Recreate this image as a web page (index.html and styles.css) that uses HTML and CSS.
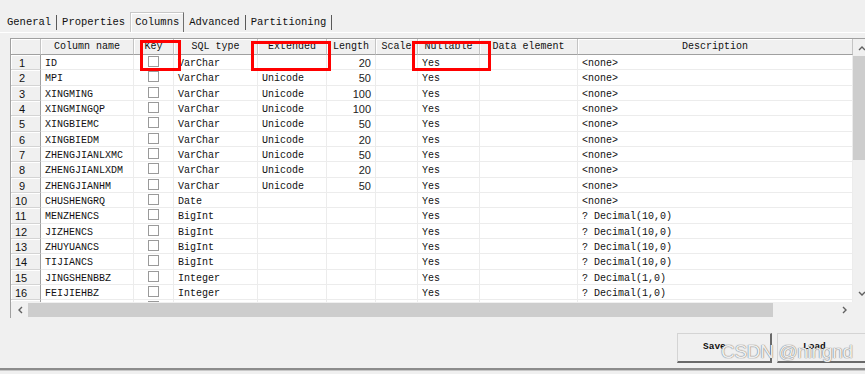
FILE: index.html
```html
<!DOCTYPE html>
<html lang="en">
<head>
    <meta charset="utf-8">
    <title>Table Properties - Columns</title>
    <link rel="stylesheet" href="styles.css">
</head>
<body>
<div class="page">
    <div class="tabs">
        <div class="tab sep">General</div>
        <div class="tab">Properties</div>
        <div class="tab active">Columns</div>
        <div class="tab sep">Advanced</div>
        <div class="tab sep">Partitioning</div>
    </div>

    <div class="grid">
        <div class="gridMain">
            <div class="gridView">
                <div class="row head">
                    <div class="cell num"></div>
                    <div class="cell">Column name</div>
                    <div class="cell">Key</div>
                    <div class="cell">SQL type</div>
                    <div class="cell">Extended</div>
                    <div class="cell">Length</div>
                    <div class="cell">Scale</div>
                    <div class="cell">Nullable</div>
                    <div class="cell">Data element</div>
                    <div class="cell">Description</div>
                </div>
                <div class="row">
                    <div class="cell num">1</div><div class="cell">ID</div><div class="cell key"><span class="box"></span></div><div class="cell">VarChar</div><div class="cell"></div><div class="cell len">20</div><div class="cell"></div><div class="cell">Yes</div><div class="cell"></div><div class="cell">&lt;none&gt;</div>
                </div>
                <div class="row">
                    <div class="cell num">2</div><div class="cell">MPI</div><div class="cell key"><span class="box"></span></div><div class="cell">VarChar</div><div class="cell">Unicode</div><div class="cell len">50</div><div class="cell"></div><div class="cell">Yes</div><div class="cell"></div><div class="cell">&lt;none&gt;</div>
                </div>
                <div class="row">
                    <div class="cell num">3</div><div class="cell">XINGMING</div><div class="cell key"><span class="box"></span></div><div class="cell">VarChar</div><div class="cell">Unicode</div><div class="cell len">100</div><div class="cell"></div><div class="cell">Yes</div><div class="cell"></div><div class="cell">&lt;none&gt;</div>
                </div>
                <div class="row">
                    <div class="cell num">4</div><div class="cell">XINGMINGQP</div><div class="cell key"><span class="box"></span></div><div class="cell">VarChar</div><div class="cell">Unicode</div><div class="cell len">100</div><div class="cell"></div><div class="cell">Yes</div><div class="cell"></div><div class="cell">&lt;none&gt;</div>
                </div>
                <div class="row">
                    <div class="cell num">5</div><div class="cell">XINGBIEMC</div><div class="cell key"><span class="box"></span></div><div class="cell">VarChar</div><div class="cell">Unicode</div><div class="cell len">50</div><div class="cell"></div><div class="cell">Yes</div><div class="cell"></div><div class="cell">&lt;none&gt;</div>
                </div>
                <div class="row">
                    <div class="cell num">6</div><div class="cell">XINGBIEDM</div><div class="cell key"><span class="box"></span></div><div class="cell">VarChar</div><div class="cell">Unicode</div><div class="cell len">20</div><div class="cell"></div><div class="cell">Yes</div><div class="cell"></div><div class="cell">&lt;none&gt;</div>
                </div>
                <div class="row">
                    <div class="cell num">7</div><div class="cell">ZHENGJIANLXMC</div><div class="cell key"><span class="box"></span></div><div class="cell">VarChar</div><div class="cell">Unicode</div><div class="cell len">50</div><div class="cell"></div><div class="cell">Yes</div><div class="cell"></div><div class="cell">&lt;none&gt;</div>
                </div>
                <div class="row">
                    <div class="cell num">8</div><div class="cell">ZHENGJIANLXDM</div><div class="cell key"><span class="box"></span></div><div class="cell">VarChar</div><div class="cell">Unicode</div><div class="cell len">20</div><div class="cell"></div><div class="cell">Yes</div><div class="cell"></div><div class="cell">&lt;none&gt;</div>
                </div>
                <div class="row">
                    <div class="cell num">9</div><div class="cell">ZHENGJIANHM</div><div class="cell key"><span class="box"></span></div><div class="cell">VarChar</div><div class="cell">Unicode</div><div class="cell len">50</div><div class="cell"></div><div class="cell">Yes</div><div class="cell"></div><div class="cell">&lt;none&gt;</div>
                </div>
                <div class="row">
                    <div class="cell num">10</div><div class="cell">CHUSHENGRQ</div><div class="cell key"><span class="box"></span></div><div class="cell">Date</div><div class="cell"></div><div class="cell len"></div><div class="cell"></div><div class="cell">Yes</div><div class="cell"></div><div class="cell">&lt;none&gt;</div>
                </div>
                <div class="row">
                    <div class="cell num">11</div><div class="cell">MENZHENCS</div><div class="cell key"><span class="box"></span></div><div class="cell">BigInt</div><div class="cell"></div><div class="cell len"></div><div class="cell"></div><div class="cell">Yes</div><div class="cell"></div><div class="cell">? Decimal(10,0)</div>
                </div>
                <div class="row">
                    <div class="cell num">12</div><div class="cell">JIZHENCS</div><div class="cell key"><span class="box"></span></div><div class="cell">BigInt</div><div class="cell"></div><div class="cell len"></div><div class="cell"></div><div class="cell">Yes</div><div class="cell"></div><div class="cell">? Decimal(10,0)</div>
                </div>
                <div class="row">
                    <div class="cell num">13</div><div class="cell">ZHUYUANCS</div><div class="cell key"><span class="box"></span></div><div class="cell">BigInt</div><div class="cell"></div><div class="cell len"></div><div class="cell"></div><div class="cell">Yes</div><div class="cell"></div><div class="cell">? Decimal(10,0)</div>
                </div>
                <div class="row">
                    <div class="cell num">14</div><div class="cell">TIJIANCS</div><div class="cell key"><span class="box"></span></div><div class="cell">BigInt</div><div class="cell"></div><div class="cell len"></div><div class="cell"></div><div class="cell">Yes</div><div class="cell"></div><div class="cell">? Decimal(10,0)</div>
                </div>
                <div class="row">
                    <div class="cell num">15</div><div class="cell">JINGSHENBBZ</div><div class="cell key"><span class="box"></span></div><div class="cell">Integer</div><div class="cell"></div><div class="cell len"></div><div class="cell"></div><div class="cell">Yes</div><div class="cell"></div><div class="cell">? Decimal(1,0)</div>
                </div>
                <div class="row">
                    <div class="cell num">16</div><div class="cell">FEIJIEHBZ</div><div class="cell key"><span class="box"></span></div><div class="cell">Integer</div><div class="cell"></div><div class="cell len"></div><div class="cell"></div><div class="cell">Yes</div><div class="cell"></div><div class="cell">? Decimal(1,0)</div>
                </div>
                <div class="row">
                    <div class="cell num"></div><div class="cell"></div><div class="cell key"><span class="box"></span></div><div class="cell"></div><div class="cell"></div><div class="cell len"></div><div class="cell"></div><div class="cell"></div><div class="cell"></div><div class="cell"></div>
                </div>
            </div>
            <div class="vscroll">
                <div class="arrow">
                    <svg width="8" height="6" viewBox="0 0 8 6"><polyline points="1,5 4,2 7,5" fill="none" stroke="#606060" stroke-width="1.4"/></svg>
                </div>
                <div class="vtrack"><div class="vthumb"></div></div>
                <div class="arrow">
                    <svg width="8" height="6" viewBox="0 0 8 6"><polyline points="1,1 4,4 7,1" fill="none" stroke="#606060" stroke-width="1.4"/></svg>
                </div>
            </div>
        </div>
        <div class="hscroll">
            <div class="arrow">
                <svg width="6" height="8" viewBox="0 0 6 8"><polyline points="5,1 2,4 5,7" fill="none" stroke="#606060" stroke-width="1.4"/></svg>
            </div>
            <div class="htrack"><div class="hthumb"></div></div>
            <div class="arrow">
                <svg width="6" height="8" viewBox="0 0 6 8"><polyline points="1,1 4,4 1,7" fill="none" stroke="#606060" stroke-width="1.4"/></svg>
            </div>
            <div class="corner"></div>
        </div>
    </div>

    <div class="actions">
        <div class="btn">Save</div>
        <div class="btn">Load</div>
    </div>
    <div class="bottomLine"></div>

    <!-- annotations drawn over the grid -->
    <div class="mark markKey"></div>
    <div class="mark markExt"></div>
    <div class="mark markNull"></div>
    <div class="watermark">CSDN @ningnd</div>
</div>
</body>
</html>
```

FILE: styles.css
```css
body{
    margin: 0;
    background: #f0f0f0;
    font-family: "Liberation Mono", "DejaVu Sans Mono", monospace;
    font-size: 10px;
    color: #111;
}
.page{
    position: relative;
    width: 865px;
    height: 374px;
    overflow: hidden;
}

/* tabs */
.tabs{
    display: flex;
    align-items: flex-end;
    height: 20px;
    padding: 12px 0 0 2px;
    border-bottom: 1px solid #fff;
}
.tab{
    height: 15px;
    line-height: 15px;
    margin-bottom: 2px;
    padding: 0 5px;
    font-size: 10.5px;
    white-space: nowrap;
}
.tab.sep{
    border-right: 1px solid #5a5a5a;
}
.tab.active{
    height: 19px;
    line-height: 18px;
    margin-bottom: 0;
    padding: 0 4px;
    border: 1px solid #c8c8c8;
    border-right-color: #6e6e6e;
    border-bottom: none;
    box-shadow: 1px 1px 0 #fff inset;
}

/* grid */
.grid{
    margin: 5px 0 0 10px;
    border-left: 1px solid #a0a0a0;
    border-top: 1px solid #a0a0a0;
    width: 860px;
}
.gridMain{
    display: flex;
}
.gridView{
    width: 842px;
    height: 263px;
    overflow: hidden;
}
.row{
    display: grid;
    grid-template-columns: 30px 93px 40px 84px 69px 49px 42px 62px 98px 275px;
    height: 15.33px;
}
.cell{
    box-sizing: border-box;
    background: #fff;
    border-right: 1px solid #ececec;
    border-bottom: 1px solid #ececec;
    padding: 1px 4px 0;
    line-height: 15px;
    white-space: nowrap;
    overflow: hidden;
}
.row.head{
    height: 16px;
}
.row.head .cell{
    background: #f0f0f0;
    border-right-color: #c4c4c4;
    border-bottom-color: #a0a0a0;
    box-shadow: 1px 1px 0 #fff inset;
    text-align: center;
    padding-top: 0;
    line-height: 16px;
}
.cell.num{
    background: #f0f0f0;
    border-right-color: #a0a0a0;
    border-bottom-color: #d4d4d4;
    box-shadow: 1px 1px 0 #fff inset;
    text-align: right;
    padding-right: 15px;
    font-family: "Liberation Sans", Arial, sans-serif;
    font-size: 11px;
}
.cell.key{
    display: flex;
    justify-content: center;
    padding-top: 1px;
}
.box{
    width: 11px;
    height: 11px;
    box-sizing: border-box;
    border: 1px solid #9a9a9a;
    background: #fff;
}
.cell.len{
    text-align: right;
    font-family: "Liberation Sans", Arial, sans-serif;
    font-size: 11px;
    color: #222;
}

/* scrollbars */
.arrow{
    width: 17px;
    height: 17px;
    display: flex;
    align-items: center;
    justify-content: center;
    flex: none;
}
.vscroll{
    width: 17px;
    height: 263px;
    display: flex;
    flex-direction: column;
    background: #f0f0f0;
}
.vtrack{
    flex: 1;
}
.vthumb{
    width: 100%;
    height: 104px;
    background: #cdcdcd;
}
.hscroll{
    display: flex;
    height: 16px;
    background: #f0f0f0;
}
.hscroll .arrow{
    height: 16px;
}
.htrack{
    width: 808px;
    padding: 1px 0;
}
.hthumb{
    width: 745px;
    height: 14px;
    background: #cdcdcd;
}
.corner{
    width: 17px;
}

/* buttons */
.actions{
    display: flex;
    justify-content: flex-end;
    gap: 5px;
    margin: 15px -7px 0 0;
}
.btn{
    box-sizing: border-box;
    width: 95px;
    height: 30px;
    padding: 7px 0 0 25px;
    border: 1px solid #d4d4d4;
    border-right: 2px solid #696969;
    border-bottom: 2px solid #696969;
    font-weight: bold;
    font-size: 9.5px;
}
.bottomLine{
    margin-top: 5px;
    height: 2px;
    background: #8c8c8c;
    border-bottom: 1px solid #c8c8c8;
}

/* annotations */
.mark{
    position: absolute;
    border: 3px solid #ff0000;
    box-sizing: border-box;
}
.markKey{
    left: 140px;
    top: 40px;
    width: 41px;
    height: 31px;
}
.markExt{
    left: 251px;
    top: 41px;
    width: 80px;
    height: 30px;
}
.markNull{
    left: 412px;
    top: 41px;
    width: 79px;
    height: 30px;
}
.watermark{
    position: absolute;
    left: 721px;
    top: 342px;
    font-family: "Liberation Sans", Arial, sans-serif;
    font-size: 19px;
    line-height: 19px;
    letter-spacing: -0.3px;
    color: rgba(255,255,255,0.9);
    text-shadow: 0 0 1px #777, 0 0 1px #777;
    white-space: nowrap;
}
```
